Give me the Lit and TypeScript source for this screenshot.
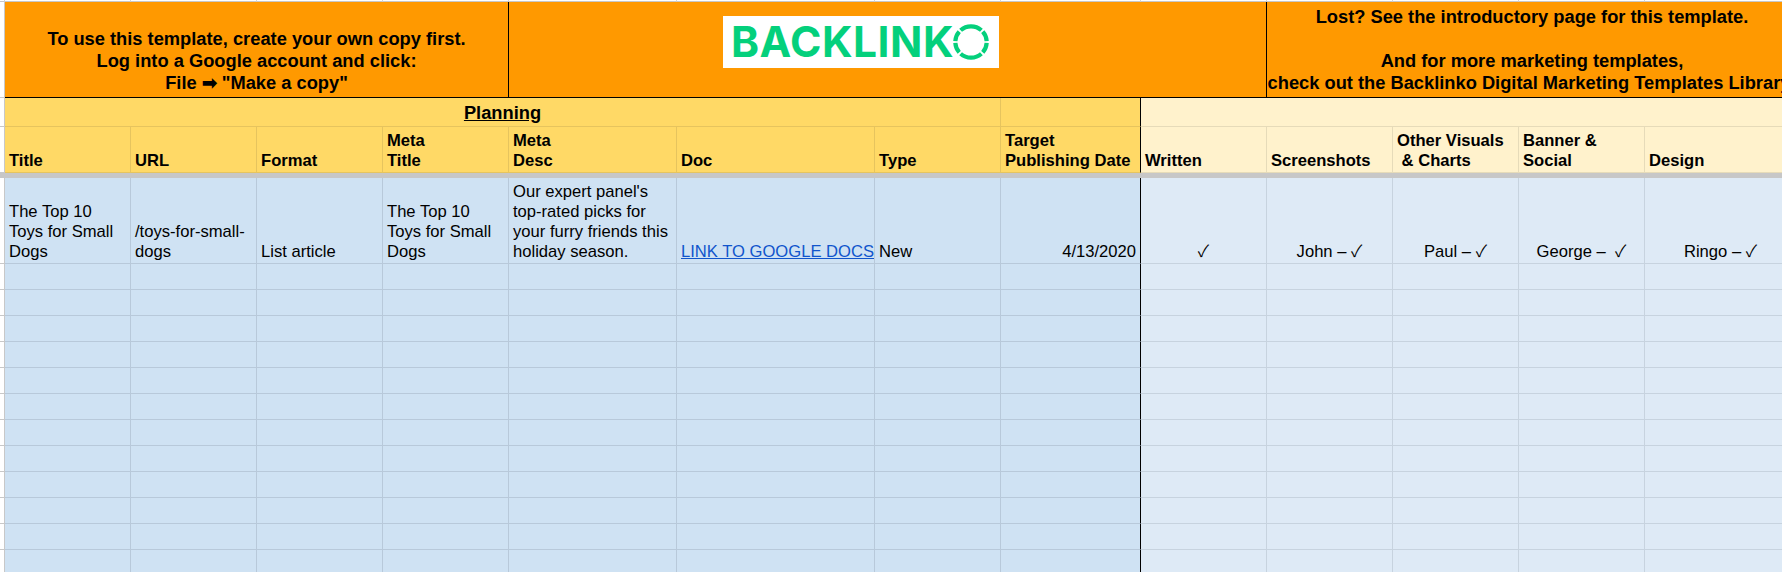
import { LitElement, html, css } from "lit";
import { customElement } from "lit/decorators.js";

const headers = [
  ["Title", "y"], ["URL", "y"], ["Format", "y"], ["Meta\nTitle", "y"], ["Meta\nDesc", "y"], ["Doc", "y"], ["Type", "y"],
  ["Target\nPublishing Date", "y"], ["Written", "c"], ["Screenshots", "c"], ["Other Visuals\n & Charts", "c"], ["Banner &\nSocial", "c"], ["Design", "c"],
];

const data = [
  "The Top 10\nToys for Small\nDogs", "/toys-for-small-\ndogs", "List article", "The Top 10\nToys for Small\nDogs",
  "Our expert panel's\ntop-rated picks for\nyour furry friends this\nholiday season.",
];

const people = ["", "John – ", "Paul – ", "George –  ", "Ringo – "];

@customElement("app-root")
export class AppRoot extends LitElement {
  static styles = css`
    :host { display: block; width: 1783px; height: 572px; overflow: hidden; background: #fff; font-family: "Liberation Sans", Arial, sans-serif; color: #000; }
    .sheet {
      width: 1782px; height: 572px; overflow: hidden; display: grid;
      grid-template-columns: 5px 126px 126px 126px 126px 168px 198px 126px 140px 126px 126px 126px 126px 152px;
      grid-template-rows: 2px 96px 29px 46px 5px 86px repeat(12, 26px);
      font-size: 16.6px; line-height: 20px;
    }
    .cell { box-sizing: border-box; min-width: 0; white-space: pre; display: flex; flex-direction: column; justify-content: flex-end; padding: 0 4px 1px 4px; border-right: 1px solid transparent; border-bottom: 1px solid transparent; overflow: hidden; }
    .stub { background: #fff; border-right: 1px solid #d4d4d4; border-bottom: 1px solid #c8c8c8; padding: 0; }
    .gut { background: #fff; border-right: 1px solid #c8c8c8; border-bottom: 1px solid #c8c8c8; padding: 0; }
    .freeze { grid-column: 1 / -1; background: #c7c7c7; }
    .banner { background: #ff9900; border-color: #000; font-size: 18.3px; line-height: 22px; font-weight: 700; text-align: center; padding: 0 0 3px 0; }
    .b-left { grid-column: span 4; }
    .b-mid { grid-column: span 5; justify-content: flex-start; padding: 14px 0 0 214px; }
    .b-right { grid-column: span 4; padding-left: 0; align-items: flex-start; }
    .b-right .inner { width: 530px; }
    .b-right .wide { margin-left: -6px; }
    .logo { box-sizing: border-box; width: 276px; height: 52px; background: #fff; display: flex; align-items: center; padding: 0 0 1px 8px; color: #04d07c; font-family: Inter, sans-serif; font-size: 42.5px; font-weight: 700; line-height: 50px; letter-spacing: 0.5px; text-align: left; }
    .ring { flex: none; width: 38px; height: 38px; margin-left: -2px; }
    .plan { grid-column: span 7; background: #ffd966; border-color: #e6c45e; text-align: center; font-weight: 700; font-size: 18.3px; padding-bottom: 3px; }
    .plan span { text-decoration: underline; }
    .plan2 { background: #ffd966; border-color: #e6c45e; border-right-color: #000; }
    .plan3 { grid-column: span 5; background: #fff2cc; border-color: #e6dbb9; }
    .hy, .hc { font-weight: 700; }
    .hy { background: #ffd966; border-color: #e6c45e; }
    .hc { background: #fff2cc; border-color: #e6dbb9; }
    .hy.black { border-right-color: #000; }
    .dy { background: #cfe2f3; border-color: #b8c9da; }
    .dc { background: #deeaf6; border-color: #c7d3df; text-align: center; }
    .dy.black { border-right-color: #000; }
    .right { text-align: right; }
    .tick { font-family: "Noto Sans CJK JP", "DejaVu Sans", sans-serif; }
    a { color: #1155cc; text-decoration: underline; }
    .doc { padding-right: 0; }
  `;

  private blankRow() {
    return html`<div class="cell gut"></div>${headers.map((_, i) =>
      html`<div class="cell ${i < 8 ? "dy" : "dc"} ${i === 7 ? "black" : ""}"></div>`)}`;
  }

  render() {
    const logoRing = html`<svg class="ring" viewBox="0 0 38 38" aria-hidden="true"><circle cx="19" cy="19" r="15.7" fill="none" stroke="#04d07c" stroke-width="4.2" pathLength="360" stroke-dasharray="38 7 83 7 38 7 38 7 83 7 38 7" stroke-dashoffset="-3.5"></circle></svg>`;
    return html`<div class="sheet">
      <div class="cell stub"></div>${headers.map(() => html`<div class="cell stub"></div>`)}

      <div class="cell gut"></div>
      <div class="cell banner b-left"><div>To use this template, create your own copy first.</div><div>Log into a Google account and click:</div><div>File ➡ "Make a copy"</div></div>
      <div class="cell banner b-mid"><div class="logo"><span>BACKLINK</span>${logoRing}</div></div>
      <div class="cell banner b-right"><div class="inner"><div>Lost? See the introductory page for this template.</div><div>&nbsp;</div><div>And for more marketing templates,</div><div class="wide">check out the Backlinko Digital Marketing Templates Library</div></div></div>

      <div class="cell gut"></div>
      <div class="cell plan"><div><span>Planning</span></div></div>
      <div class="cell plan2"></div>
      <div class="cell plan3"></div>

      <div class="cell gut"></div>
      ${headers.map(([t, k], i) => html`<div class="cell ${k === "y" ? "hy" : "hc"} ${i === 7 ? "black" : ""}"><div>${t}</div></div>`)}

      <div class="freeze"></div>

      <div class="cell gut"></div>
      ${data.map((t) => html`<div class="cell dy"><div>${t}</div></div>`)}
      <div class="cell dy doc"><div><a href="#">LINK TO GOOGLE DOCS</a></div></div>
      <div class="cell dy"><div>New</div></div>
      <div class="cell dy black right"><div>4/13/2020</div></div>
      ${people.map((p) => html`<div class="cell dc"><div>${p}<span class="tick">✓</span></div></div>`)}

      ${Array.from({ length: 12 }, () => this.blankRow())}
    </div>`;
  }
}
